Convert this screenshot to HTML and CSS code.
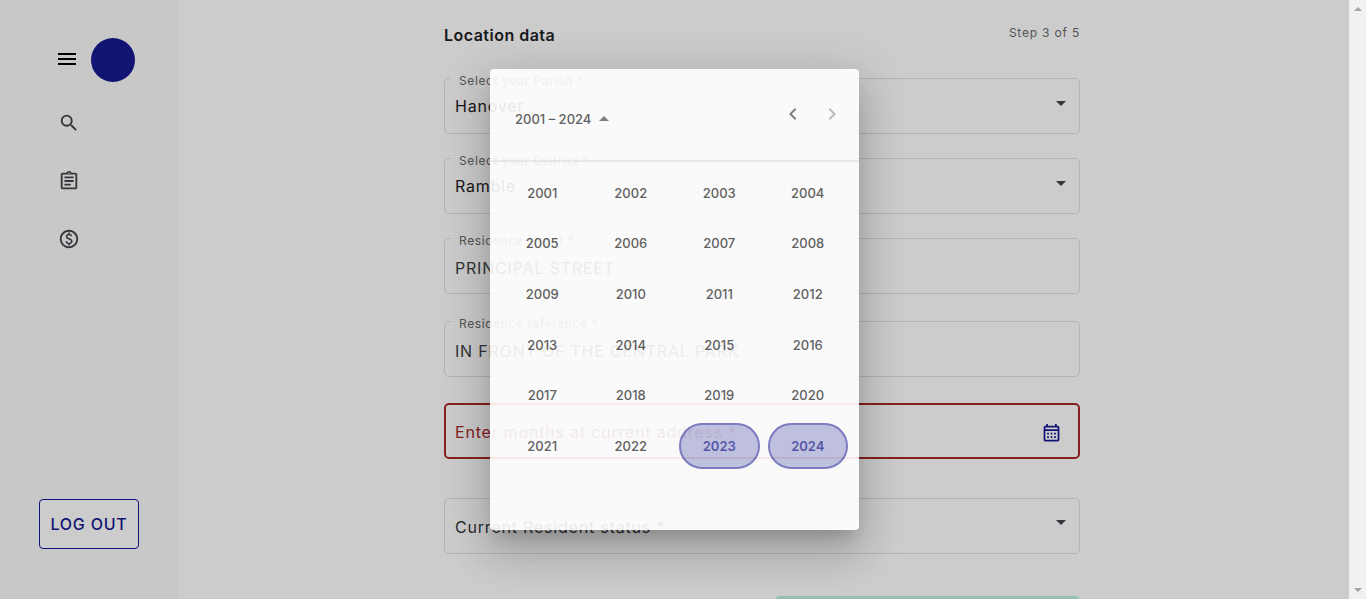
FILE: index.html
```html
<!DOCTYPE html>
<html lang="en">
<head>
<meta charset="utf-8">
<meta name="viewport" content="width=device-width, initial-scale=1">
<title>Location data</title>
<link rel="stylesheet" href="styles.css">
</head>
<body>
<div class="window">
  <div class="app">
    <aside class="sidebar">
      <div class="brand">
        <button class="icon-button" type="button"><svg class="icon icon-menu" viewBox="0 0 24 24"><path d="M3 18h18v-2H3v2zm0-5h18v-2H3v2zm0-7v2h18V6H3z"/></svg></button>
        <span class="avatar"></span>
      </div>
      <nav class="nav">
        <a href="#search"><svg class="icon icon-nav" viewBox="0 0 24 24"><path d="M15.5 14h-.79l-.28-.27A6.47 6.47 0 0 0 16 9.5 6.5 6.5 0 1 0 9.5 16c1.61 0 3.09-.59 4.23-1.57l.27.28v.79l5 4.99L20.49 19l-4.99-5zm-6 0C7.01 14 5 11.99 5 9.5S7.01 5 9.500 5 14 7.010 14 9.500 11.990 14 9.500 14z"/></svg></a>
        <a href="#forms"><svg class="icon icon-nav" viewBox="0 0 24 24"><path d="M7 15h7v2H7zm0-4h10v2H7zm0-4h10v2H7zm12-4h-4.180C14.400 1.840 13.300 1 12 1s-2.400.84-2.820 2H5c-1.100 0-2 .9-2 2v14c0 1.100.9 2 2 2h14c1.100 0 2-.9 2-2V5c0-1.100-.9-2-2-2zm-7-.25c.41 0 .75.34.75.75s-.34.75-.75.75-.75-.34-.75-.75.34-.75.75-.75zM19 19H5V5h14v14z"/></svg></a>
        <a href="#payments"><svg class="icon icon-nav" viewBox="0 0 24 24"><path d="M12 2C6.480 2 2 6.480 2 12s4.480 10 10 10 10-4.480 10-10S17.520 2 12 2zm0 18c-4.410 0-8-3.590-8-8s3.590-8 8-8 8 3.590 8 8-3.590 8-8 8zm.89-8.900c-1.780-.59-2.640-.96-2.640-1.900 0-1.020 1.110-1.390 1.810-1.390 1.310 0 1.790.99 1.900 1.340l1.580-.67c-.15-.44-.82-1.910-2.660-2.230V5h-1.750v1.260c-2.600.56-2.620 2.850-2.620 2.960 0 2.270 2.250 2.910 3.350 3.310 1.580.56 2.280 1.070 2.280 2.030 0 1.130-1.050 1.610-1.980 1.610-1.820 0-2.340-1.870-2.400-2.090l-1.660.67c.63 2.190 2.280 2.780 3.020 2.960V19h1.750v-1.240c.52-.09 3.020-.59 3.020-3.220.010-1.390-.6-2.610-3-3.440z"/></svg></a>
      </nav>
      <button class="logout" type="button">LOG OUT</button>
    </aside>

    <main class="main">
      <form class="form">
        <header class="form-header">
          <h1>Location data</h1>
          <span class="step">Step 3 of 5</span>
        </header>
        <div class="field">
          <label for="parish">Select your Parish *</label>
          <select id="parish"><option>Hanover</option></select>
          <svg class="arrow" viewBox="0 0 10 5"><path d="M0 0h10L5 5z"/></svg>
        </div>
        <div class="field">
          <label for="district">Select your District *</label>
          <select id="district"><option>Ramble</option></select>
          <svg class="arrow" viewBox="0 0 10 5"><path d="M0 0h10L5 5z"/></svg>
        </div>
        <div class="field field-text">
          <label for="street">Residence street *</label>
          <input id="street" type="text" value="PRINCIPAL STREET">
        </div>
        <div class="field field-text">
          <label for="reference">Residence reference *</label>
          <input id="reference" type="text" value="IN FRONT OF THE CENTRAL PARK">
        </div>
        <div class="field field-error">
          <label class="resting" for="months">Enter months at current address *</label>
          <input id="months" type="text">
          <button class="icon-button calendar-toggle" type="button"><svg class="icon icon-calendar" viewBox="0 0 24 24"><path d="M7 11H9V13H7V11M21 5V19C21 20.110 20.110 21 19 21H5C3.890 21 3 20.100 3 19V5C3 3.900 3.900 3 5 3H6V1H8V3H16V1H18V3H19C20.110 3 21 3.900 21 5M5 5V7H19V5H5M19 19V9H5V19H19M15 13V11H17V13H15M11 13V11H13V13H11M7 15H9V17H7V15M15 17V15H17V17H15M11 17V15H13V17H11Z"/></svg></button>
        </div>
        <div class="field field-status">
          <label class="resting" for="status">Current Resident status *</label>
          <select id="status"></select>
          <svg class="arrow" viewBox="0 0 10 5"><path d="M0 0h10L5 5z"/></svg>
        </div>
        <button class="submit" type="submit"></button>
      </form>
    </main>

    <div class="backdrop">
      <section class="calendar" role="dialog">
        <header class="calendar-header">
          <button class="period" type="button">2001 – 2024<svg class="period-arrow" viewBox="0 0 10 5"><path d="M0 5h10L5 0z"/></svg></button>
          <div class="pager">
            <button class="icon-button" type="button"><svg class="icon icon-page" viewBox="0 0 24 24"><path d="M15.410 7.410L14 6l-6 6 6 6 1.410-1.410L10.830 12z"/></svg></button>
            <button class="icon-button" type="button" disabled><svg class="icon icon-page" viewBox="0 0 24 24"><path d="M8.590 16.590L10 18l6-6-6-6-1.410 1.410L13.170 12z"/></svg></button>
          </div>
        </header>
        <div class="years">
          <button type="button">2001</button><button type="button">2002</button><button type="button">2003</button><button type="button">2004</button>
          <button type="button">2005</button><button type="button">2006</button><button type="button">2007</button><button type="button">2008</button>
          <button type="button">2009</button><button type="button">2010</button><button type="button">2011</button><button type="button">2012</button>
          <button type="button">2013</button><button type="button">2014</button><button type="button">2015</button><button type="button">2016</button>
          <button type="button">2017</button><button type="button">2018</button><button type="button">2019</button><button type="button">2020</button>
          <button type="button">2021</button><button type="button">2022</button><button type="button" class="active">2023</button><button type="button" class="active">2024</button>
        </div>
      </section>
    </div>
  </div>
  <div class="scrollbar">
    <svg viewBox="0 0 8 4"><path d="M0 4h8L4 0z"/></svg>
    <svg viewBox="0 0 8 4"><path d="M0 0h8L4 4z"/></svg>
  </div>
</div>
</body>
</html>
```

FILE: styles.css
```css
* { box-sizing: border-box; }

body {
  margin: 0;
  font-family: Inter, "Liberation Sans", sans-serif;
  font-size: 16px;
  letter-spacing: 0.05em;
  color: #1f2226;
}

button, input, select {
  font: inherit;
  letter-spacing: inherit;
  color: inherit;
  background: none;
  border: 0;
  margin: 0;
  padding: 0;
}

.icon { display: block; fill: currentColor; }
.icon-button { display: block; }
.icon-menu, .icon-page { width: 24px; height: 24px; }
.icon-nav { width: 22px; height: 22px; }
.icon-calendar { width: 21px; height: 21px; }

.window { display: flex; height: 100vh; overflow: hidden; }
.app { position: relative; display: flex; flex: 1; overflow: hidden; }

.sidebar {
  display: flex;
  flex-direction: column;
  width: 178px;
  padding: 38px 39px 50px;
  background: #fafafa;
}
.brand { display: flex; align-items: center; gap: 12px; padding-left: 16px; color: #000; }
.brand .icon-button { padding-bottom: 2px; }
.avatar { width: 44px; height: 44px; border-radius: 50%; background: #161a90; }
.nav { display: flex; flex-direction: column; gap: 36px; padding: 30px 19px; }
.nav a { display: block; color: #41444a; }
.logout {
  height: 50px;
  margin-top: auto;
  border: 1px solid #161a90;
  border-radius: 4px;
  background: #fff;
  color: #161a90;
  font-weight: 500;
}

.main { flex: 1; padding: 23px 3px 0 0; background: #fff; }
.form { display: flex; flex-direction: column; width: 100%; max-width: 636px; margin: 0 auto; }
.form-header { display: flex; justify-content: space-between; height: 55px; }
.form-header h1 { margin: 0; font-size: 16px; line-height: 24px; font-weight: 600; letter-spacing: 0.03em; }
.step { font-size: 12px; line-height: 20px; color: #6b6b6b; }

.field {
  position: relative;
  display: flex;
  align-items: center;
  flex: none;
  height: 56px;
  margin-bottom: 24px;
  padding: 0 13px 0 10px;
  border: 1px solid #e0e0e0;
  border-radius: 5px;
}
.field-text { margin-bottom: 26px; padding-top: 4px; color: #41444a; }
.field-text + .field-text { margin-top: 1px; }
.field-error { margin-bottom: 39px; padding: 0 16px 0 9px; border: 2px solid #a82a2a; }
.field-status { margin-bottom: 42px; color: #34373c; }
.field label {
  position: absolute;
  top: -8px;
  left: 6px;
  padding: 0 8px;
  background: #fff;
  font-size: 12px;
  line-height: 20px;
  letter-spacing: 0.05em;
  color: #6b6b6b;
}
.field label.resting {
  top: 16px;
  left: 10px;
  padding: 0;
  background: none;
  font-size: 16px;
  line-height: 24px;
  color: inherit;
}
.field-error label.resting { top: 15px; left: 9px; color: #a82a2a; }
.field input, .field select { flex: 1; min-width: 0; height: 100%; appearance: none; outline: 0; opacity: 1; }
.arrow { width: 10px; height: 5px; margin-bottom: 6px; fill: #41444a; }
.field-status .arrow { margin-bottom: 8px; }
.calendar-toggle { color: #161a90; margin-top: 4px; }
.submit { align-self: flex-end; flex: none; width: 48%; height: 50px; border-radius: 5px; background: #b9f0d9; }

.backdrop {
  position: absolute;
  inset: 0;
  display: flex;
  align-items: center;
  justify-content: center;
  background: rgba(0, 0, 0, 0.2);
}
.calendar {
  width: 369px;
  padding-bottom: 61px;
  border-radius: 4px;
  background: #fff;
  opacity: 0.9;
  letter-spacing: normal;
  color: #555;
  box-shadow: 0 11px 15px -7px rgba(0, 0, 0, 0.2), 0 24px 38px 3px rgba(0, 0, 0, 0.14), 0 9px 46px 8px rgba(0, 0, 0, 0.12);
}
.calendar-header {
  display: flex;
  align-items: center;
  justify-content: space-between;
  height: 93px;
  padding: 0 15px 2px 25px;
  border-bottom: 2px solid #ededed;
}
.period { display: flex; align-items: center; gap: 8px; padding-top: 10px; font-size: 13px; font-weight: 500; }
.period-arrow { width: 10px; height: 5px; fill: #777; }
.pager { display: flex; gap: 15px; color: #777; }
.pager button:disabled { color: #bbb; }
.years { display: grid; grid-template: repeat(6, 1fr) / repeat(4, 1fr); gap: 5px 8px; height: 307px; padding: 8px 11px 0 12px; }
.years button { border: 2px solid transparent; border-radius: 23px; font-size: 13px; font-weight: 500; }
.years .active { border-color: #7474c0; background: rgba(21, 26, 144, 0.28); color: #4a4aa6; font-weight: 600; }

.scrollbar {
  display: flex;
  flex-direction: column;
  align-items: center;
  justify-content: space-between;
  width: 17px;
  padding: 7px 0;
  background: #f1f1f1;
}
.scrollbar svg { width: 8px; height: 4px; fill: #a3a3a3; }
```
